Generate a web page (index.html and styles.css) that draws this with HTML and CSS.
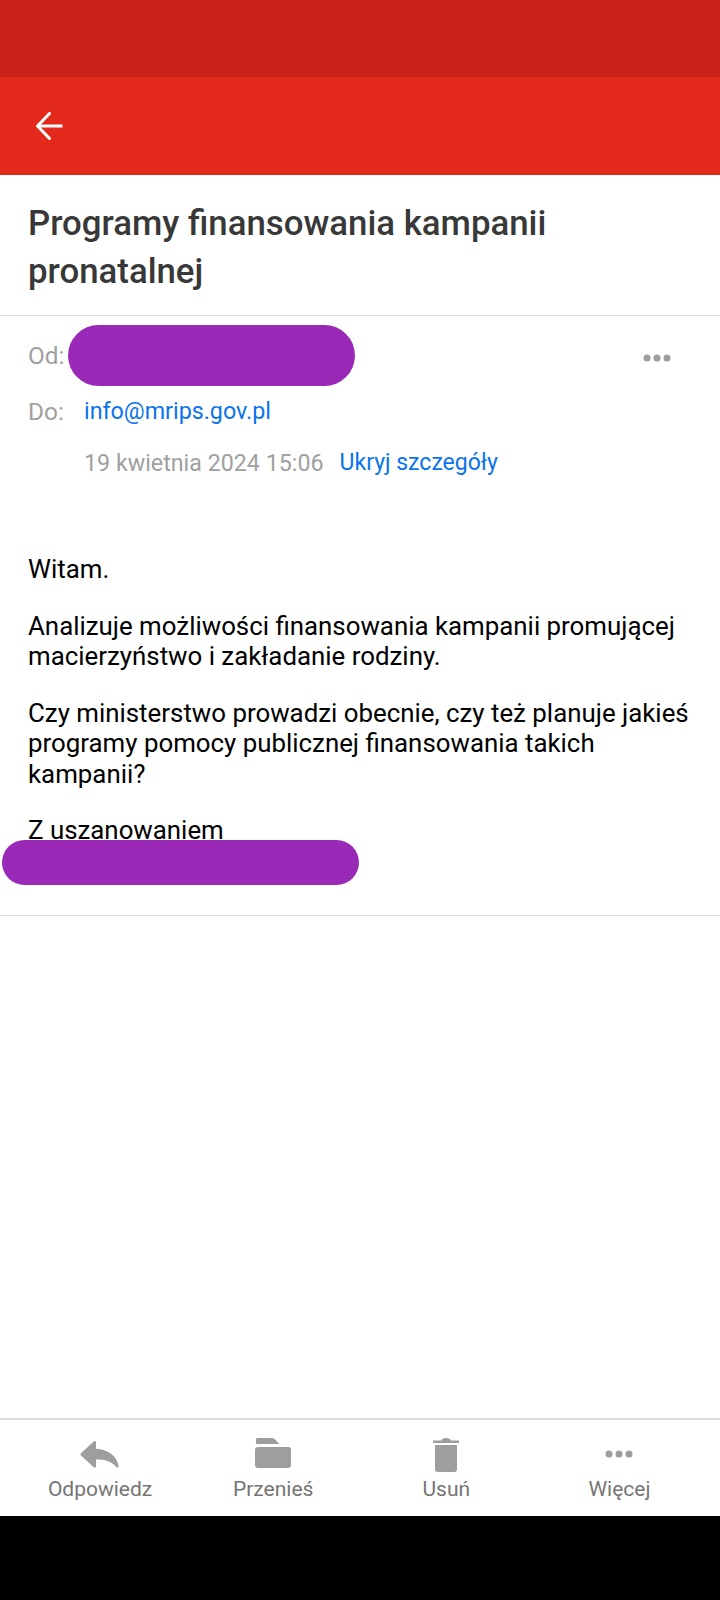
FILE: index.html
```html
<!DOCTYPE html>
<html lang="pl">
<head>
    <meta charset="UTF-8">
    <meta name="viewport" content="width=device-width, initial-scale=1.0">
    <title>Programy finansowania kampanii pronatalnej</title>
    <link rel="stylesheet" href="styles.css">
</head>
<body>
    <div class="screen">
        <div class="status-bar"></div>
        <header class="toolbar">
            <svg class="back-icon" viewBox="0 0 28 28" width="28" height="28" fill="none" stroke="#fff" stroke-width="3" stroke-linecap="round" stroke-linejoin="round">
                <path d="M13.5 1.5 1.5 14l12 12.500"/>
                <path d="M2 14h24.500" stroke-linecap="butt"/>
            </svg>
        </header>

        <main class="message">
            <h1 class="subject">Programy finansowania kampanii pronatalnej</h1>

            <section class="details">
                <div class="detail-row from-row">
                    <span class="detail-label">Od:</span>
                    <span class="redaction from-redaction"></span>
                    <svg class="more-icon" viewBox="0 0 28 8" width="28" height="8" fill="#9e9e9e">
                        <circle cx="4" cy="4" r="3.500"/><circle cx="14" cy="4" r="3.500"/><circle cx="24" cy="4" r="3.500"/>
                    </svg>
                </div>
                <div class="detail-row to-row">
                    <span class="detail-label">Do:</span>
                    <a class="link">info@mrips.gov.pl</a>
                </div>
                <div class="date-row">
                    <span class="date">19 kwietnia 2024 15:06</span>
                    <a class="link details-toggle">Ukryj szczegóły</a>
                </div>
            </section>

            <section class="body-text">
                <p>Witam.</p>
                <p>Analizuje możliwości finansowania kampanii promującej macierzyństwo i zakładanie rodziny.</p>
                <p>Czy ministerstwo prowadzi obecnie, czy też planuje jakieś programy pomocy publicznej finansowania takich kampanii?</p>
                <p class="signature">Z uszanowaniem</p>
                <span class="redaction signature-redaction"></span>
            </section>
        </main>

        <nav class="actions">
            <div class="action">
                <svg viewBox="0 0 40 30" width="40" height="30" fill="#9e9e9e">
                    <path d="M16 2.500c0-1.300-1.300-1.900-2.300-1L1 13.200c-.8.700-.8 1.700 0 2.400l12.700 11.700c1 .9 2.300.3 2.300-1v-6.900c8.500 0 15 1.500 20.300 7.600.9 1 2.700.5 2.400-.9C36.500 15.500 28 9.400 16 8.800z"/>
                </svg>
                <span>Odpowiedz</span>
            </div>
            <div class="action">
                <svg viewBox="0 0 36 30" width="36" height="30" fill="#9e9e9e" preserveAspectRatio="xMidYMin">
                    <path d="M2.500 0h14.500c1 0 1.900.4 2.600 1.100L24.500 6H1V1.500C1 .6 1.600 0 2.500 0z"/>
                    <path d="M3 9h30.500C35 9 36 10 36 11.500V27c0 1.700-1.300 3-3 3H3c-1.700 0-3-1.300-3-3V12c0-1.700 1.300-3 3-3z"/>
                </svg>
                <span>Przenieś</span>
            </div>
            <div class="action">
                <svg viewBox="0 0 26 34" width="26" height="34" fill="#9e9e9e">
                    <path d="M0 2.500h8C8.500 1 10 0 13 0s4.500 1 5 2.500h8V5H0z"/>
                    <path d="M2 7h22v24.500c0 1.400-1.100 2.500-2.500 2.500h-17C3.100 34 2 32.900 2 31.500z"/>
                </svg>
                <span>Usuń</span>
            </div>
            <div class="action">
                <svg viewBox="0 0 28 8" width="28" height="8" fill="#9e9e9e" preserveAspectRatio="xMidYMin">
                    <circle cx="4" cy="16" r="3.500"/><circle cx="14" cy="16" r="3.500"/><circle cx="24" cy="16" r="3.500"/>
                </svg>
                <span>Więcej</span>
            </div>
        </nav>

        <div class="system-nav"></div>
    </div>
</body>
</html>
```

FILE: styles.css
```css
body {
    margin: 0;
    background: #fff;
    font-family: Roboto, "Liberation Sans", sans-serif;
}
.screen {
    display: flex;
    flex-direction: column;
    height: 1600px;
    overflow: hidden;
}
.status-bar {
    height: 77px;
    background: #c9221a;
}
.toolbar {
    display: flex;
    align-items: center;
    height: 98px;
    padding-left: 36px;
    background: #e3281c;
}
.message {
    flex: 1;
}
.subject {
    margin: 0;
    padding: 24px 100px 20px 28px;
    border-bottom: 1px solid #ddd;
    color: #383838;
    font-size: 34.800px;
    font-weight: 500;
    line-height: 48px;
}
.details {
    padding: 0 28px;
    font-size: 23.250px;
    color: #a0a0a0;
}
.detail-row {
    display: flex;
    align-items: center;
}
.from-row {
    position: relative;
    height: 80px;
}
.from-row .detail-label {
    margin-bottom: 2px;
}
.to-row {
    height: 30px;
}
.detail-label {
    width: 56px;
    font-size: 24.400px;
}
.more-icon {
    position: absolute;
    right: 21px;
    top: 38px;
}
.date-row {
    display: flex;
    gap: 16px;
    margin-top: 21px;
    padding-left: 56px;
    line-height: 32px;
}
.link {
    color: #0a74ee;
}
.details-toggle {
    font-size: 23px;
}
.redaction {
    position: absolute;
    background: #9b29b7;
    border-radius: 32px;
}
.from-redaction {
    left: 40px;
    top: 9px;
    width: 287px;
    height: 61px;
}
.body-text {
    position: relative;
    margin-top: 75px;
    padding: 0 28px 69px;
    border-bottom: 1px solid #ddd;
    color: #000;
    font-size: 25.850px;
    line-height: 30.500px;
}
.body-text p {
    margin: 0 0 26px;
}
.body-text .signature {
    margin: 0;
}
.signature-redaction {
    left: 2px;
    bottom: 30px;
    width: 357px;
    height: 45px;
    border-radius: 23px;
}
.actions {
    display: grid;
    grid-template-columns: repeat(4, 1fr);
    height: 96px;
    padding: 0 14px 0 13.500px;
    border-top: 2px solid #ddd;
}
.action {
    display: flex;
    flex-direction: column;
    align-items: center;
    height: 96px;
    color: #757575;
    font-size: 21px;
}
.action svg {
    margin-top: 18px;
    height: 34px;
    overflow: visible;
}
.action span {
    margin-top: 5px;
}
.system-nav {
    height: 84px;
    background: #000;
}
```
